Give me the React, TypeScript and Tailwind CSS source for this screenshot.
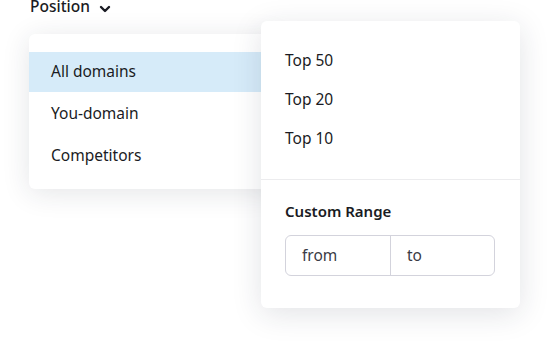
import React from 'react';

const domainOptions = ['All domains', 'You-domain', 'Competitors'];
const topOptions = ['Top 50', 'Top 20', 'Top 10'];

const ChevronDown: React.FC = () => (
  <svg width="12" height="12" viewBox="0 0 12 12" fill="none" className="ml-[9px] mt-[3px]">
    <path d="M2 4l4 4 4-4" stroke="#1a1b23" strokeWidth="2.4" strokeLinecap="round" strokeLinejoin="round" />
  </svg>
);

const App: React.FC = () => {
  return (
    <div
      className="relative w-[549px] h-[348px] overflow-hidden bg-white text-[#1a1b23]"
      style={{ fontFamily: '"Noto Sans", "Open Sans", sans-serif' }}
    >
      {/* trigger */}
      <div className="flex items-start pl-[30px] h-[14px]">
        <span className="text-[15.5px] leading-[12px] font-medium">Position</span>
        <ChevronDown />
      </div>

      {/* first level menu */}
      <div className="absolute left-[29px] top-[34px] w-[250px] h-[155px] bg-white rounded-md shadow-[0_4px_28px_rgba(30,40,60,0.12)] pt-[18px]">
        {domainOptions.map((label, i) => (
          <div
            key={label}
            className={`flex items-center pl-[22px] text-[15.5px] ${i === 0 ? 'bg-[#d6ebf9] h-[40px] mb-[1px]' : 'h-[42px]'}`}
          >
            {label}
          </div>
        ))}
      </div>

      {/* second level menu */}
      <div className="absolute left-[261px] top-[21px] w-[259px] h-[287px] bg-white rounded-md shadow-[0_6px_30px_rgba(30,40,60,0.13)] flex flex-col">
        <div className="pt-[20px] pb-[21px]">
          {topOptions.map((label) => (
            <div key={label} className="h-[39px] flex items-center pl-[24px] text-[15.5px]">
              {label}
            </div>
          ))}
        </div>
        <div className="h-px bg-[#ececee]" />
        <div className="px-[24px] pt-[20px]">
          <div className="text-[15px] font-semibold h-[22px] flex items-center">Custom Range</div>
          <div className="mt-[13px] w-[210px] h-[41px] flex border border-[#d3d3dc] rounded-md text-[15.5px] text-[#3a3b45]">
            <div className="w-[105px] flex items-center pl-[16px] border-r border-[#d3d3dc]">from</div>
            <div className="flex-1 flex items-center pl-[16px]">to</div>
          </div>
        </div>
      </div>
    </div>
  );
};

export default App;
